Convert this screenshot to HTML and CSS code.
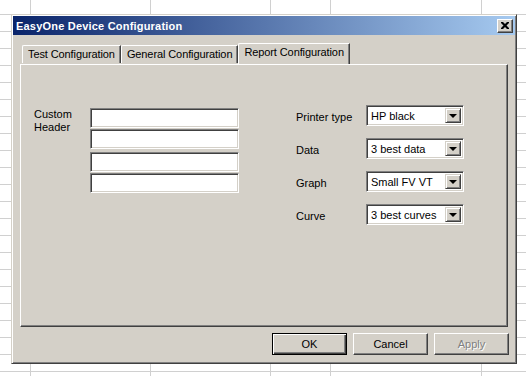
FILE: index.html
```html
<!DOCTYPE html>
<html lang="en">
<head>
  <meta charset="UTF-8" />
  <title>EasyOne Device Configuration</title>
  <link rel="stylesheet" href="styles.css">
</head>
<body>
  <div class="dialog">
    <div class="titlebar">
      <span class="title">EasyOne Device Configuration</span>
      <button class="close" aria-label="Close">
        <svg width="8" height="7" viewBox="0 0 8 7"><path d="M0 0h2l2 2 2-2h2v1l-2.5 2.5L8 6v1H6L4 5 2 7H0V6l2.5-2.5L0 1z" fill="#000"/></svg>
      </button>
    </div>

    <div class="tabs">
      <div class="tab">Test Configuration</div>
      <div class="tab">General Configuration</div>
      <div class="tab active">Report Configuration</div>
    </div>

    <div class="panel">
      <div class="header-group">
        <label class="header-label">Custom<br>Header</label>
        <div class="fields">
          <div class="pair">
            <input type="text" class="textbox" />
            <input type="text" class="textbox" />
          </div>
          <div class="pair">
            <input type="text" class="textbox" />
            <input type="text" class="textbox" />
          </div>
        </div>
      </div>

      <div class="options">
        <label>Printer type</label>
        <div class="combo"><span>HP black</span><i class="drop"></i></div>
        <label>Data</label>
        <div class="combo"><span>3 best data</span><i class="drop"></i></div>
        <label>Graph</label>
        <div class="combo"><span>Small FV VT</span><i class="drop"></i></div>
        <label>Curve</label>
        <div class="combo"><span>3 best curves</span><i class="drop"></i></div>
      </div>
    </div>

    <div class="buttons">
      <button class="btn default">OK</button>
      <button class="btn">Cancel</button>
      <button class="btn" disabled>Apply</button>
    </div>
  </div>
</body>
</html>
```

FILE: styles.css
```css
* { box-sizing: border-box; margin: 0; padding: 0; }
body {
  width: 526px; height: 376px; overflow: hidden; position: relative;
  font-family: "Liberation Sans", Arial, sans-serif; font-size: 11px; color: #000;
  background-color: #fff;
  background-image:
    linear-gradient(to right, transparent 30px, #d0d0d0 30px 31px, transparent 31px 150px, #d0d0d0 150px 151px, transparent 151px 270px, #d0d0d0 270px 271px, transparent 271px 330px, #d0d0d0 330px 331px, transparent 331px 481px, #d0d0d0 481px 482px, transparent 482px),
    repeating-linear-gradient(to bottom, transparent 0 16px, #d0d0d0 16px 17px);
  background-position: 0 0, 0 -2px;
}

/* window sits over the sheet */
.dialog {
  position: absolute; left: 11px; top: 14px; width: 506px; height: 350px;
  background: #d4d0c8; padding: 1px;
  border: 1px solid; border-color: #d4d0c8 #404040 #404040 #d4d0c8;
  box-shadow: inset 1px 1px #fff, inset -1px -1px #808080;
  display: flex; flex-direction: column;
}
.titlebar {
  height: 19px; display: flex; align-items: center; justify-content: space-between;
  padding: 0 2px 0 3px;
  background: linear-gradient(to right, #0a246a, #a6caf0);
}
.title { color: #fff; font-weight: bold; letter-spacing: 0.2px; }
.close {
  width: 16px; height: 14px; display: flex; align-items: center; justify-content: center;
  background: #d4d0c8; border: 1px solid; border-color: #fff #404040 #404040 #fff;
  box-shadow: inset -1px -1px #808080;
}

.tabs { display: flex; align-items: flex-end; margin: 8px 7px 0; padding-left: 2px; position: relative; z-index: 1; }
.tab {
  height: 18px; padding: 0 5px; line-height: 16px; text-align: center; letter-spacing: -0.1px;
  border-top: 1px solid #fff; border-left: 1px solid #fff; border-right: 1px solid #404040;
  border-top-left-radius: 2px; box-shadow: inset -1px 0 #808080;
  margin-bottom: 1px;
}
.tab.active { height: 21px; margin-bottom: 0; line-height: 17px; background: #d4d0c8; }

.panel {
  flex: 1; margin: 0 7px; display: flex; align-items: flex-start; gap: 57px;
  padding: 40px 0 0 13px;
  border: 1px solid; border-color: #fff #404040 #404040 #fff;
  box-shadow: inset -1px -1px #808080;
}
.header-group { display: flex; margin-top: 3px; }
.header-label { width: 56px; line-height: 13px; }
.fields { display: flex; flex-direction: column; gap: 3px; }
.pair { display: flex; flex-direction: column; gap: 1px; }
.textbox {
  width: 149px; height: 20px; background: #fff; font: inherit;
  border: 1px solid; border-color: #808080 #fff #fff #808080;
  box-shadow: inset 1px 1px #404040, inset -1px -1px #d4d0c8;
  outline: none;
}

.options { display: grid; grid-template-columns: 70px 98px; grid-auto-rows: 21px; row-gap: 12px; align-items: center; }
.options label { padding-top: 3px; }
.combo {
  height: 21px; display: flex; align-items: center; justify-content: space-between;
  background: #fff; padding: 2px 2px 2px 4px;
  border: 1px solid; border-color: #808080 #fff #fff #808080;
  box-shadow: inset 1px 1px #404040, inset -1px -1px #d4d0c8;
}
.drop {
  width: 16px; height: 15px; position: relative; background: #d4d0c8;
  border: 1px solid; border-color: #d4d0c8 #404040 #404040 #d4d0c8;
  box-shadow: inset 1px 1px #fff, inset -1px -1px #808080;
}
.drop::after {
  content: ""; position: absolute; left: 3px; top: 5px;
  border-left: 4px solid transparent; border-right: 4px solid transparent; border-top: 4px solid #000;
}

.buttons { display: flex; justify-content: flex-end; gap: 6px; margin: 6px 6px 7px; }
.btn {
  width: 75px; height: 22px; font: inherit; color: #000; background: #d4d0c8;
  border: 1px solid; border-color: #fff #404040 #404040 #fff;
  box-shadow: inset -1px -1px #808080;
}
.btn.default { border-color: #000; box-shadow: inset 1px 1px #fff, inset -1px -1px #404040, inset -2px -2px #808080; }
.btn:disabled { color: #808080; text-shadow: 1px 1px #fff; }
```
